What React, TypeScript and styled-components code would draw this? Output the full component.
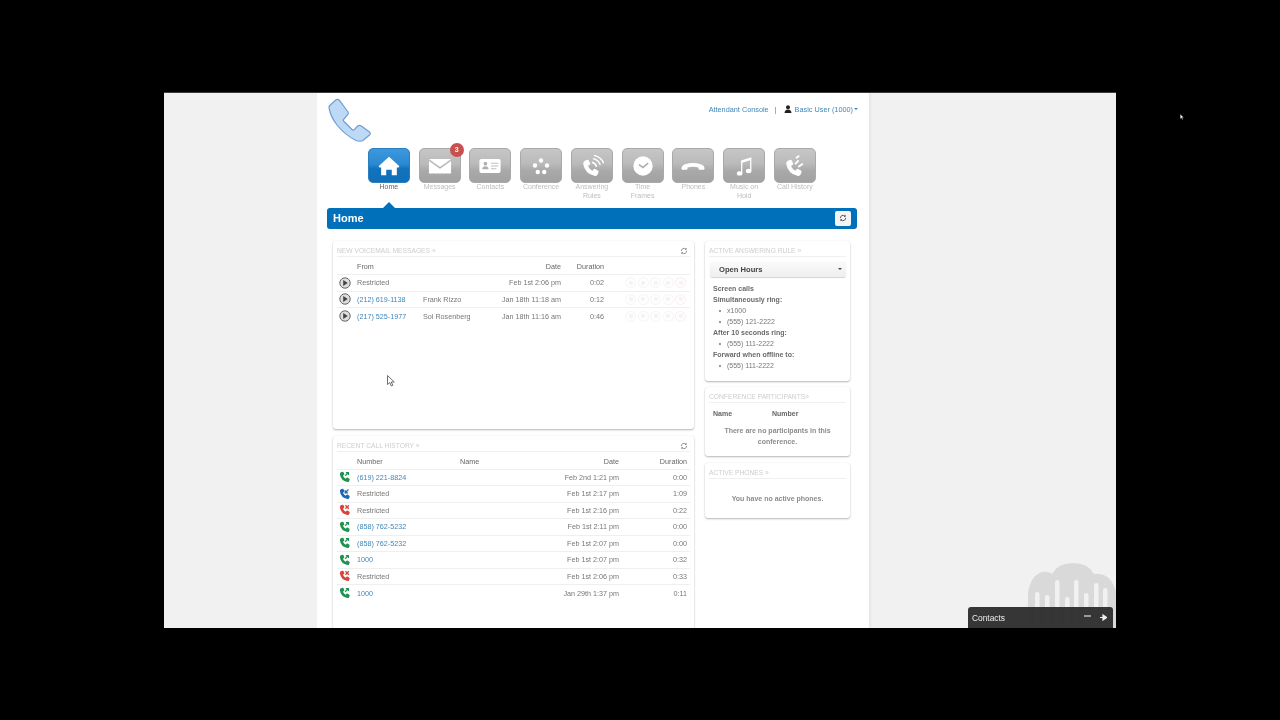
import { ReactNode } from 'react'
import styled, { createGlobalStyle } from 'styled-components'

const GlobalStyle = createGlobalStyle`
  html, body {
    margin: 0;
    padding: 0;
    width: 1280px;
    height: 720px;
    overflow: hidden;
    background: #000;
    font-family: "Liberation Sans", Arial, sans-serif;
  }
`

const Page = styled.div`
  position: relative;
  width: 1280px;
  height: 720px;
  padding: 92px 164px 92px;
  box-sizing: border-box;
  background: #000;
`

const Screen = styled.div`
  position: relative;
  height: 536px;
  box-sizing: border-box;
  overflow: hidden;
  border-top: 1px solid #3c3c3c;
  background: #f1f1f1;
  filter: blur(0.3px);
`

const Column = styled.div`
  width: 552px;
  height: 100%;
  margin-left: 153px;
  background: #fff;
  box-shadow: 2px 0 2px #e6e6e6;
`

const Header = styled.div`
  display: flex;
  justify-content: space-between;
  height: 55px;
  padding: 0 11px;
`

const Logo = styled.svg`
  width: 44px;
  height: 44px;
  margin-top: 5px;
`

const UserLinks = styled.div`
  display: flex;
  align-items: center;
  height: 12px;
  margin-top: 10px;
  font-size: 7.3px;
  color: #3f87ba;
`

const Divider = styled.span`
  margin: 0 7px 0 6px;
  color: #777;
`

const UserGlyph = styled.svg`
  width: 8px;
  height: 8px;
  margin-right: 3px;
`

const Caret = styled.span`
  width: 0;
  height: 0;
  margin-left: 1px;
  border-left: 2px solid transparent;
  border-right: 2px solid transparent;
  border-top: 2px solid ${({ color }) => color || '#3f87ba'};
`

const Nav = styled.div`
  display: grid;
  grid-template-columns: repeat(9, 50.75px);
  height: 60px;
  padding-left: 46.5px;
`

const Tab = styled.div`
  display: flex;
  flex-direction: column;
  align-items: center;
`

const TabButton = styled.div<{ $active?: boolean }>`
  position: relative;
  display: flex;
  align-items: center;
  justify-content: center;
  width: 42px;
  height: 35px;
  box-sizing: border-box;
  border: 1px solid ${({ $active }) => ($active ? '#2b7fbd' : '#a9a9a9')};
  border-radius: 5px;
  background: ${({ $active }) =>
    $active
      ? 'linear-gradient(#3c98de 0%, #2b8ad2 45%, #1273bd 60%, #0f6fb8 100%)'
      : 'linear-gradient(#c6c6c6 0%, #bababa 45%, #a9a9a9 65%, #a2a2a2 100%)'};
`

const TabLabel = styled.div<{ $active?: boolean }>`
  width: 40px;
  font-size: 7px;
  line-height: 8.5px;
  text-align: center;
  white-space: pre-line;
  color: ${({ $active }) => ($active ? '#666' : '#bdbdbd')};
`

const Badge = styled.span`
  position: absolute;
  top: -6px;
  right: -4px;
  width: 14px;
  height: 14px;
  border-radius: 50%;
  background: #c9504f;
  color: #fff;
  font-size: 7px;
  font-weight: bold;
  line-height: 14px;
  text-align: center;
`

const TabIcon = styled.svg`
  width: 24px;
  height: 24px;
`

const TitleBar = styled.div`
  position: relative;
  display: flex;
  align-items: center;
  justify-content: space-between;
  height: 21px;
  box-sizing: border-box;
  margin: 0 12px 0 10px;
  padding: 0 6px 1px;
  border-radius: 3px;
  background: #0070bb;
  color: #fff;
  font-size: 11px;
  font-weight: bold;

  &::before {
    content: '';
    position: absolute;
    left: 56px;
    top: -6px;
    border-left: 6px solid transparent;
    border-right: 6px solid transparent;
    border-bottom: 6px solid #0070bb;
  }
`

const BarButton = styled.div`
  display: flex;
  align-items: center;
  justify-content: center;
  width: 16px;
  height: 15px;
  border-radius: 2px;
  background: #f4f4f4;
`

const Main = styled.div`
  display: grid;
  grid-template-columns: 361px 145px;
  column-gap: 11px;
  padding: 12px 0 0 16px;
`

const Stack = styled.div`
  display: flex;
  flex-direction: column;
  gap: 6.5px;
`

const Panel = styled.div<{ $height?: number }>`
  height: ${({ $height }) => ($height ? `${$height}px` : 'auto')};
  padding: 0 4px;
  box-sizing: border-box;
  border-radius: 3px;
  background: #fff;
  box-shadow: 0 1px 2px #b5b5b5, 0 0 1px #e8e8e8;
`

const PanelTitle = styled.div`
  display: flex;
  align-items: center;
  justify-content: space-between;
  height: 9.5px;
  padding-top: 5.5px;
  border-bottom: 1px solid #f0f0f0;
  font-size: 6.7px;
  line-height: 10px;
  color: #cdcdcd;
  text-transform: uppercase;
`

const RefreshSmall = styled.svg<{ $dark?: boolean }>`
  width: 8px;
  height: 8px;
  margin-right: ${({ $dark }) => ($dark ? 0 : 2)}px;
  color: ${({ $dark }) => ($dark ? '#333' : '#777')};
`

const Row = styled.div<{ $cols: string; $head?: boolean }>`
  display: grid;
  grid-template-columns: ${({ $cols }) => $cols};
  align-items: center;
  height: ${({ $head }) => ($head ? '18px' : '16.5px')};
  padding-top: ${({ $head }) => ($head ? '2px' : '0')};
  box-sizing: border-box;
  border-bottom: 1px solid #efefef;
  font-size: 7.2px;
  color: ${({ $head }) => ($head ? '#666' : '#777')};

  &:last-child {
    border-bottom: none;
  }
`

const Cell = styled.div<{ $right?: boolean }>`
  display: flex;
  align-items: center;
  justify-content: ${({ $right }) => ($right ? 'flex-end' : 'flex-start')};
  white-space: nowrap;
`

const IconCell = styled(Cell)`
  padding-left: 2px;
`

const Link = styled.span`
  color: #3f87ba;
`

const Actions = styled.div`
  display: flex;
  gap: 1.5px;
`

const ActionDot = styled.span<{ $warn?: boolean }>`
  display: flex;
  align-items: center;
  justify-content: center;
  width: 9px;
  height: 9px;
  border: 1px solid ${({ $warn }) => ($warn ? '#faeeee' : '#f5f5f5')};
  border-radius: 50%;
  background: #fefefe;

  &::after {
    content: '';
    width: 4px;
    height: 4px;
    border-radius: 1px;
    background: ${({ $warn }) => ($warn ? '#fbf0f0' : '#f4f4f4')};
  }
`

const RowIcon = styled.svg`
  width: 12px;
  height: 12px;
`

const SelectBox = styled.div`
  display: flex;
  align-items: center;
  justify-content: space-between;
  height: 16px;
  margin: 4px 0 0 1px;
  padding: 0 4px 0 9px;
  border-radius: 2px;
  background: linear-gradient(#fbfbfb, #eeeeee);
  box-shadow: 0 1px 1px #d5d5d5;
  font-size: 7.6px;
  font-weight: bold;
  color: #444;
`

const RuleList = styled.div`
  padding: 5.5px 0 10px 4px;
  font-size: 7px;
  line-height: 11px;
  color: #777;
`

const RuleHead = styled.div`
  font-weight: bold;
  color: #6a6a6a;
`

const RuleItem = styled.div`
  position: relative;
  padding-left: 14px;

  &::before {
    content: '';
    position: absolute;
    left: 6px;
    top: 5px;
    width: 2px;
    height: 2px;
    border-radius: 50%;
    background: #777;
  }
`

const ParticipantHead = styled.div`
  display: grid;
  grid-template-columns: 59px 1fr;
  margin-top: 5px;
  padding-left: 4px;
  font-size: 7px;
  font-weight: bold;
  line-height: 11px;
  color: #666;
`

const EmptyNote = styled.div<{ $top: number }>`
  margin-top: ${({ $top }) => $top}px;
  padding: 0 8px;
  font-size: 7px;
  font-weight: bold;
  line-height: 11px;
  color: #8c8c8c;
  text-align: center;
`

const Cloud = styled.svg`
  position: absolute;
  right: -1px;
  bottom: 0;
  width: 89px;
  height: 66px;
`

const ChatDock = styled.div`
  position: absolute;
  right: 3px;
  bottom: 0;
  display: flex;
  align-items: center;
  justify-content: space-between;
  width: 145px;
  height: 21px;
  padding: 0 6px 0 4px;
  box-sizing: border-box;
  border-radius: 3px 3px 0 0;
  background: rgba(40, 40, 40, 0.93);
  color: #eee;
  font-size: 8.4px;
`

const DockTools = styled.div`
  display: flex;
  align-items: center;
  gap: 9px;
`

const Pointer = styled.svg<{ $left: number; $top: number; $size: number }>`
  position: absolute;
  left: ${({ $left }) => $left}px;
  top: ${({ $top }) => $top}px;
  width: ${({ $size }) => $size}px;
  height: ${({ $size }) => $size * 1.5}px;
`

const handset =
  'M2.2 1.6 L4 .9 Q4.8 .7 5.1 1.3 L6.2 3.6 Q6.4 4.2 5.8 4.6 L4.6 5.5 Q5.6 7.8 7.9 9.1 L8.8 7.9 Q9.3 7.4 9.9 7.7 L12.1 8.9 Q12.7 9.3 12.5 10 L11.8 11.9 Q11.3 13 9.8 12.9 Q2.2 11.5 1 3.8 Q1 2.2 2.2 1.6 Z'

const RefreshGlyph = () => (
  <g fill="none" stroke="currentColor" strokeWidth="1.2">
    <path d="M2 6.2 A4 4 0 0 1 9 3.4" />
    <path d="M10 5.8 A4 4 0 0 1 3 8.6" />
    <path d="M9.8 1.2 V4 H7" fill="currentColor" stroke="none" />
    <path d="M2.2 10.8 V8 H5" fill="currentColor" stroke="none" />
  </g>
)

const icons: Record<string, ReactNode> = {
  home: (
    <path
      d="M13 3 L24 13 Q24.5 14.5 23 14.5 H21.5 V23 H16 V17 H10 V23 H4.5 V14.5 H3 Q1.5 14.5 2 13 Z"
      fill="#fff"
    />
  ),
  mail: (
    <g fill="#fff">
      <path d="M1 5.5 H25 L13 14 Z" />
      <path d="M1 7.5 L13 16 L25 7.5 V21 H1 Z" />
    </g>
  ),
  card: (
    <g>
      <rect x="1.5" y="5.5" width="23" height="15" rx="2" fill="#fff" />
      <circle cx="8" cy="10.5" r="2" fill="#b0b0b0" />
      <path d="M4.5 16.5 Q4.8 13.2 8 13.2 Q11.2 13.2 11.5 16.5 Z" fill="#b0b0b0" />
      <path d="M14 10 H22 M14 13 H22 M14 16 H20" stroke="#c0c0c0" strokeWidth="1.3" />
    </g>
  ),
  dots: (
    <g fill="#fff">
      <circle cx="13" cy="7" r="2.4" />
      <circle cx="6.5" cy="12.5" r="2.4" />
      <circle cx="19.5" cy="12.5" r="2.4" />
      <circle cx="9.5" cy="19.5" r="2.4" />
      <circle cx="16.5" cy="19.5" r="2.4" />
    </g>
  ),
  rules: (
    <g>
      <path d={handset} fill="#fff" transform="translate(2 5) scale(1.45)" />
      <path d="M13 9 Q17 10 18 14 M14 5 Q20 6 22 12 M15 1.5 Q23 3 25.5 10" fill="none" stroke="#fff" strokeWidth="1.6" />
    </g>
  ),
  clock: (
    <g>
      <circle cx="13" cy="13" r="10.5" fill="#fff" />
      <path d="M8.5 11.5 L13 14.5 L18.5 10" fill="none" stroke="#b0b0b0" strokeWidth="1.8" />
    </g>
  ),
  hangup: (
    <path
      d="M.5 16 Q.5 12.5 4.5 11 Q13 8.5 21.5 11 Q25.5 12.5 25.5 16 Q25.5 17 24.5 17 H20 Q19 17 19 16 V14.5 Q13 13 7 14.5 V16 Q7 17 6 17 H1.5 Q.5 17 .5 16 Z"
      fill="#fff"
    />
  ),
  music: (
    <g fill="#fff">
      <path d="M9.8 7 L21 3.5 V18.5 H19.6 V6.8 L11.2 9.4 V21 H9.8 Z" />
      <ellipse cx="8.2" cy="21" rx="3" ry="2.4" />
      <ellipse cx="18" cy="18.5" rx="3" ry="2.4" />
    </g>
  ),
  history: (
    <g>
      <path d={handset} fill="#fff" transform="translate(2 5) scale(1.45)" />
      <path d="M13 11 L17 7 M16.5 14 L21.5 10.5 M14 4.5 L17.5 2" fill="none" stroke="#fff" strokeWidth="2" />
    </g>
  ),
}

const tabs = [
  { key: 'home', label: 'Home', active: true },
  { key: 'mail', label: 'Messages', badge: '3' },
  { key: 'card', label: 'Contacts' },
  { key: 'dots', label: 'Conference' },
  { key: 'rules', label: 'Answering\nRules' },
  { key: 'clock', label: 'Time\nFrames' },
  { key: 'hangup', label: 'Phones' },
  { key: 'music', label: 'Music on\nHold' },
  { key: 'history', label: 'Call History' },
]

const voicemails = [
  { from: 'Restricted', name: '', date: 'Feb 1st 2:06 pm', duration: '0:02', link: false },
  { from: '(212) 619-1138', name: 'Frank Rizzo', date: 'Jan 18th 11:18 am', duration: '0:12', link: true },
  { from: '(217) 525-1977', name: 'Sol Rosenberg', date: 'Jan 18th 11:16 am', duration: '0:46', link: true },
]

const calls = [
  { kind: 'out', number: '(619) 221-8824', date: 'Feb 2nd 1:21 pm', duration: '0:00', link: true },
  { kind: 'in', number: 'Restricted', date: 'Feb 1st 2:17 pm', duration: '1:09', link: false },
  { kind: 'missed', number: 'Restricted', date: 'Feb 1st 2:16 pm', duration: '0:22', link: false },
  { kind: 'out', number: '(858) 762-5232', date: 'Feb 1st 2:11 pm', duration: '0:00', link: true },
  { kind: 'out', number: '(858) 762-5232', date: 'Feb 1st 2:07 pm', duration: '0:00', link: true },
  { kind: 'out', number: '1000', date: 'Feb 1st 2:07 pm', duration: '0:32', link: true },
  { kind: 'missed', number: 'Restricted', date: 'Feb 1st 2:06 pm', duration: '0:33', link: false },
  { kind: 'out', number: '1000', date: 'Jan 29th 1:37 pm', duration: '0:11', link: true },
]

const voicemailCols = '20px 66px 70px 68px 43px 21px 62px'
const historyCols = '20px 103px 159px 68px 3px'

const callColors: Record<string, string> = { out: '#1f9150', in: '#1c67b5', missed: '#d8433b' }

function CallIcon({ kind }: { kind: string }) {
  const color = callColors[kind]
  return (
    <RowIcon viewBox="0 0 14 14">
      <path d={handset} fill={color} />
      {kind === 'out' && <path d="M7.2 5.5 L10.5 2.2 M8 1.8 H11 V4.8" fill="none" stroke={color} strokeWidth="1.4" />}
      {kind === 'in' && <path d="M11 1.8 L7.5 5.3 M7.2 2.6 V5.8 H10.4" fill="none" stroke={color} strokeWidth="1.4" />}
      {kind === 'missed' && <path d="M7.5 1.5 L11.5 5.5 M11.5 1.5 L7.5 5.5" fill="none" stroke={color} strokeWidth="1.5" />}
    </RowIcon>
  )
}

function PlayIcon() {
  return (
    <RowIcon viewBox="0 0 12 12">
      <circle cx="6" cy="6" r="5.2" fill="#dedede" stroke="#666" strokeWidth="1" />
      <path d="M4.2 3 L8.8 6 L4.2 9 Z" fill="#444" />
    </RowIcon>
  )
}

function Refresh() {
  return (
    <RefreshSmall viewBox="0 0 12 12">
      <RefreshGlyph />
    </RefreshSmall>
  )
}

export default function App() {
  return (
    <Page>
      <GlobalStyle />
      <Screen>
        <Column>
          <Header>
            <Logo viewBox="0 0 44 44">
              <path
                d="M1.2 8 L8 1.8 Q10 .8 11.5 2.5 L20 14 Q20.8 15.5 19.5 16.8 L15.5 21.5 Q15 22.5 16 23.5 L24 31.5 Q25 32.5 26 31.8 L30 27.8 Q31.5 26.8 33 27.8 L41.5 34 Q43 35.5 41.5 37 L35 42.5 Q32 44 28 42.5 Q17 37 9 27 Q3 19 1.5 12 Q.8 9.5 1.2 8 Z"
                fill="#bdd9f5"
                stroke="#6d9fd0"
                strokeWidth="1.2"
              />
            </Logo>
            <UserLinks>
              Attendant Console
              <Divider>|</Divider>
              <UserGlyph viewBox="0 0 8 8">
                <circle cx="4" cy="2.2" r="2" fill="#222" />
                <path d="M.5 8 Q.8 4.4 4 4.4 Q7.2 4.4 7.5 8 Z" fill="#222" />
              </UserGlyph>
              Basic User (1000)
              <Caret />
            </UserLinks>
          </Header>
          <Nav>
            {tabs.map((tab) => (
              <Tab key={tab.key}>
                <TabButton $active={tab.active}>
                  <TabIcon viewBox="0 0 26 26">{icons[tab.key]}</TabIcon>
                  {tab.badge && <Badge>{tab.badge}</Badge>}
                </TabButton>
                <TabLabel $active={tab.active}>{tab.label}</TabLabel>
              </Tab>
            ))}
          </Nav>
          <TitleBar>
            Home
            <BarButton>
              <RefreshSmall $dark viewBox="0 0 12 12">
                <RefreshGlyph />
              </RefreshSmall>
            </BarButton>
          </TitleBar>
          <Main>
            <Stack>
              <Panel $height={188}>
                <PanelTitle>
                  New Voicemail Messages »
                  <Refresh />
                </PanelTitle>
                <div>
                  <Row $cols={voicemailCols} $head>
                    <Cell />
                    <Cell>From</Cell>
                    <Cell />
                    <Cell $right>Date</Cell>
                    <Cell $right>Duration</Cell>
                  </Row>
                  {voicemails.map((item) => (
                    <Row $cols={voicemailCols} key={item.from}>
                      <IconCell>
                        <PlayIcon />
                      </IconCell>
                      <Cell>{item.link ? <Link>{item.from}</Link> : item.from}</Cell>
                      <Cell>{item.name}</Cell>
                      <Cell $right>{item.date}</Cell>
                      <Cell $right>{item.duration}</Cell>
                      <Cell />
                      <Actions>
                        <ActionDot />
                        <ActionDot />
                        <ActionDot />
                        <ActionDot />
                        <ActionDot $warn />
                      </Actions>
                    </Row>
                  ))}
                </div>
              </Panel>
              <Panel $height={200}>
                <PanelTitle>
                  Recent Call History »
                  <Refresh />
                </PanelTitle>
                <div>
                  <Row $cols="20px 103px 91px 68px 68px 3px" $head>
                    <Cell />
                    <Cell>Number</Cell>
                    <Cell>Name</Cell>
                    <Cell $right>Date</Cell>
                    <Cell $right>Duration</Cell>
                  </Row>
                  {calls.map((call, index) => (
                    <Row $cols={historyCols} key={index}>
                      <IconCell>
                        <CallIcon kind={call.kind} />
                      </IconCell>
                      <Cell>{call.link ? <Link>{call.number}</Link> : call.number}</Cell>
                      <Cell $right>{call.date}</Cell>
                      <Cell $right>{call.duration}</Cell>
                    </Row>
                  ))}
                </div>
              </Panel>
            </Stack>
            <Stack>
              <Panel>
                <PanelTitle>Active Answering Rule »</PanelTitle>
                <SelectBox>
                  Open Hours
                  <Caret color="#444" />
                </SelectBox>
                <RuleList>
                  <RuleHead>Screen calls</RuleHead>
                  <RuleHead>Simultaneously ring:</RuleHead>
                  <RuleItem>x1000</RuleItem>
                  <RuleItem>(555) 121-2222</RuleItem>
                  <RuleHead>After 10 seconds ring:</RuleHead>
                  <RuleItem>(555) 111-2222</RuleItem>
                  <RuleHead>Forward when offline to:</RuleHead>
                  <RuleItem>(555) 111-2222</RuleItem>
                </RuleList>
              </Panel>
              <Panel $height={69}>
                <PanelTitle>Conference Participants»</PanelTitle>
                <ParticipantHead>
                  <span>Name</span>
                  <span>Number</span>
                </ParticipantHead>
                <EmptyNote $top={6}>There are no participants in this conference.</EmptyNote>
              </Panel>
              <Panel $height={55}>
                <PanelTitle>Active Phones »</PanelTitle>
                <EmptyNote $top={14}>You have no active phones.</EmptyNote>
              </Panel>
            </Stack>
          </Main>
        </Column>
        <Cloud viewBox="0 0 89 66">
          <path
            d="M0 66 V32 Q2 14 14 10 Q20 9 24 12 Q30 1 45 1 Q60 1 66 12 Q80 10 86 24 Q89 30 89 36 V66 Z"
            fill="#d9d9d9"
          />
          <g fill="#f1f1f1">
            <rect x="7" y="30" width="4.5" height="36" rx="2.2" />
            <rect x="17" y="33" width="4.5" height="33" rx="2.2" />
            <rect x="27" y="18" width="4.5" height="48" rx="2.2" />
            <rect x="37" y="35" width="4.5" height="31" rx="2.2" />
            <rect x="46" y="18" width="4.5" height="48" rx="2.2" />
            <rect x="56" y="31" width="4.5" height="35" rx="2.2" />
            <rect x="66" y="21" width="4.5" height="45" rx="2.2" />
            <rect x="75" y="26" width="4.5" height="40" rx="2.2" />
          </g>
        </Cloud>
        <ChatDock>
          Contacts
          <DockTools>
            <svg width="7" height="7" viewBox="0 0 7 7">
              <path d="M0 2 H7" stroke="#ddd" strokeWidth="1.2" />
            </svg>
            <svg width="7" height="7" viewBox="0 0 7 7">
              <path d="M0 3.5 H4 M3 1 L6.5 3.5 L3 6 Z" stroke="#eee" strokeWidth="1.2" fill="#eee" />
            </svg>
          </DockTools>
        </ChatDock>
        <Pointer $left={223} $top={282} $size={8} viewBox="0 0 8 12">
          <path d="M.5 .5 V9.5 L2.8 7.5 L4.2 11 L5.8 10.3 L4.3 7 H7.3 Z" fill="#fff" stroke="#333" strokeWidth=".7" />
        </Pointer>
      </Screen>
      <Pointer $left={1180} $top={114} $size={4} viewBox="0 0 8 12">
        <path d="M.5 .5 V9.5 L2.8 7.5 L4.2 11 L5.8 10.3 L4.3 7 H7.3 Z" fill="#fff" stroke="#333" strokeWidth=".7" />
      </Pointer>
    </Page>
  )
}
